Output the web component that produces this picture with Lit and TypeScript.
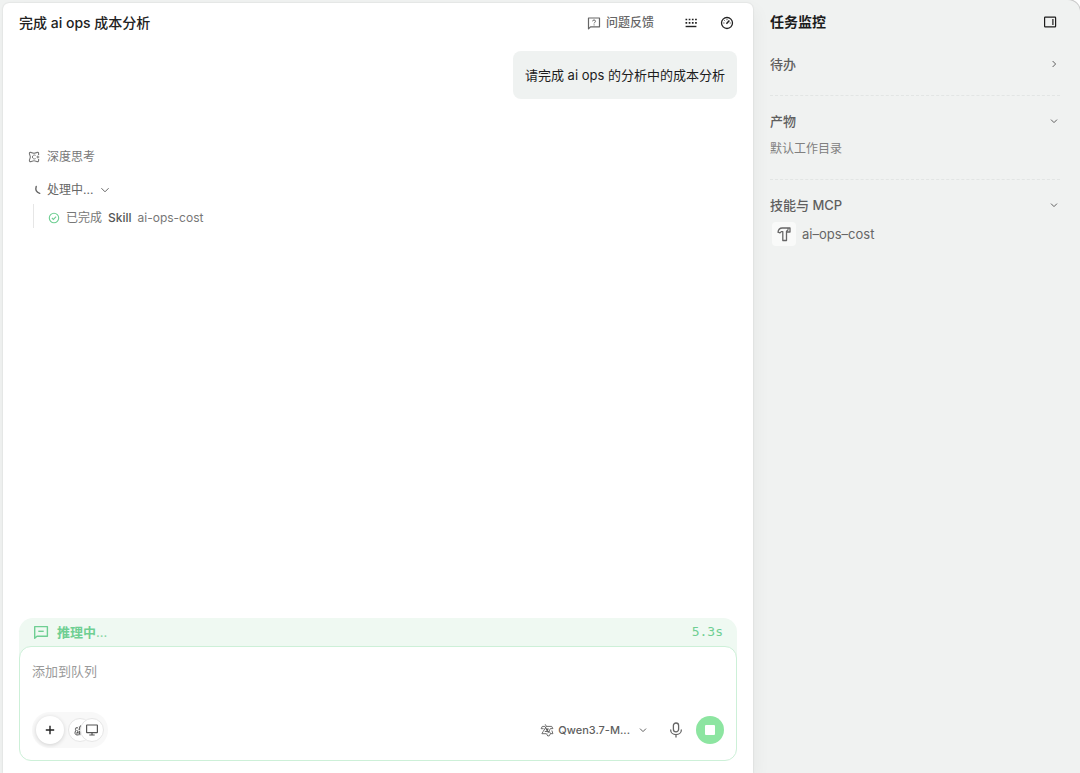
import { LitElement, html, css, svg } from "lit";
import { customElement, property, state } from "lit/decorators.js";

type Glyph = { box: number; body: unknown };

const glyphs: Record<string, Glyph> = {
  feedback: {
    box: 14,
    body: svg`<path d="M1.500 12.800V2h11v8.800H3.500z" stroke-width="1.200" stroke-linejoin="round"/><path d="M5.600 5.300c0-1.800 2.900-1.800 2.900 0 0 1-1.400 1-1.400 2.100M7.100 8.400v1"/>`,
  },
  keyboard: {
    box: 14,
    body: svg`<path d="M1.500 3.500h11.600M1.500 6.900h11.600" stroke-width="1.700" stroke-dasharray="1.700 1.500"/><path d="M1.600 10.500h10.800" stroke-width="1.400"/>`,
  },
  gauge: {
    box: 14,
    body: svg`<circle cx="7" cy="7" r="5.500" stroke-width="1.300"/><path d="M6.400 7.700l3-3.300" stroke-width="1.500"/><path d="M3.200 7h1.300M4.300 4.300l.8.800M7 3v1.200M9.700 7h1.100" stroke-width=".8"/>`,
  },
  panel: {
    box: 14,
    body: svg`<rect x="1.600" y="2.200" width="11" height="9.600" rx=".6" stroke-width="1.200"/><path d="M9.900 4v6" stroke-width="1.200"/>`,
  },
  right: { box: 10, body: svg`<path d="M3.600 2l3 3-3 3"/>` },
  down: { box: 10, body: svg`<path d="M2 3.600l3 3 3-3"/>` },
  expand: { box: 12, body: svg`<path d="M2.400 4.200L6 7.800l3.600-3.600"/>` },
  think: {
    box: 12,
    body: svg`<path d="M10.600 4V2.600c0-1-.6-1.400-1.400-1.200-1.200.3-2 .9-3.200.9S4 1.700 2.800 1.400C2 1.200 1.400 1.600 1.400 2.600c0 1.200.9 1.900.9 3.400s-.9 2.200-.9 3.400c0 1 .6 1.400 1.400 1.200 1.200-.3 2-.9 3.200-.9s2 .6 3.200.9c.8.200 1.400-.2 1.400-1.200V8" stroke-width="1.100"/><path d="M7.600 4.400c-1.300-.9-3.200 0-3.200 1.600s1.900 2.500 3.200 1.600M9.900 4.600v2.800M8.500 6h2.800"/>`,
  },
  spinner: { box: 12, body: svg`<path d="M5.200 2.500c-1 3.200.6 5.900 3.500 6.900" stroke-width="1.400" stroke-linecap="round"/>` },
  check: { box: 12, body: svg`<circle cx="6" cy="6" r="4.700" stroke-width="1.100"/><path d="M3.900 6l1.500 1.500 2.700-2.800" stroke-width="1.100"/>` },
  hammer: {
    box: 16,
    body: svg`<path d="M2 6.200c.3-2.600 1.700-4.200 4.300-4.200H14v4h-2.600l-.9-.7v9.200H6.800V5.600H5.300L4 6.900z" stroke-width="1.300" stroke-linejoin="round"/><path d="M10.500 5.300L12 3.900V2" stroke-width="1.100"/>`,
  },
  message: {
    box: 16,
    body: svg`<path d="M1.700 14.200V2.600h12.700v9.600H4z" stroke-width="1.400" stroke-linejoin="round"/><path d="M5.300 7.300h5.400" stroke-width="1.400"/>`,
  },
  plus: { box: 12, body: svg`<path d="M6 1.800v8.400M1.800 6h8.400" stroke-width="1.400"/>` },
  critter: {
    box: 14,
    body: svg`<path d="M5 4.800C2.700 4.400 2 6.400 2.700 7.600c-1.200 2-.9 4.200 1.300 4.400 2.300.2 3.400-1.700 2.600-4M3.500 7.400l1.600.9-1.300 2.200M6.300 3.400c.6 1.200-.2 2.300-.3 3.800M7.900 2.200c-.1 2-1.200 2.900-1.100 5M2.400 5.600l1-1.300M3.400 9.900h3.200M6.900 8.200v4" stroke-width="1"/>`,
  },
  monitor: {
    box: 14,
    body: svg`<rect x="1.600" y="2" width="10.800" height="7.600" rx=".4" stroke-width="1.200"/><path d="M7 9.600v2.200M4.300 12h5.400" stroke-width="1.200"/>`,
  },
  qwen: {
    box: 14,
    body: svg`<path d="M5.200 1.300l1.200 2.100h5.300l1.200 2.200h-2.500L7.800 10.300M2.300 3.400h2.600l2.600 4.700M2.300 3.400L1.100 5.700h2.500M6.400 3.400L3.100 8.600l-1.200 2.100h4.500L7.800 13l1.500-.2 1.200-2.200-1.200-2.100H4.800M10.500 10.600l2.400.1-1-3.200" stroke-width=".9" stroke-linejoin="round"/><path d="M5.400 5.500h3.600L7.200 8.500z" fill="currentColor" stroke="none"/>`,
  },
  mic: {
    box: 16,
    body: svg`<rect x="5.400" y="1" width="5.200" height="8.800" rx="2.600" stroke-width="1.300"/><path d="M2.600 7.400c0 7 10.800 7 10.800 0M8 12.700v2.700" stroke-width="1.300"/>`,
  },
};

@customElement("ui-icon")
export class UiIcon extends LitElement {
  @property() name = "";

  static styles = css`
    :host {
      display: inline-flex;
      flex: none;
    }
    svg {
      display: block;
      fill: none;
      stroke: currentColor;
    }
  `;

  render() {
    const g = glyphs[this.name];
    return html`<svg width=${g.box} height=${g.box} viewBox="0 0 ${g.box} ${g.box}" aria-hidden="true">${g.body}</svg>`;
  }
}

const base = css`
  * {
    box-sizing: border-box;
  }
  h1,
  h2,
  h3,
  p {
    margin: 0;
    font-weight: 500;
  }
  button {
    display: inline-flex;
    align-items: center;
    justify-content: center;
    margin: 0;
    padding: 0;
    border: 0;
    background: none;
    color: inherit;
    font: inherit;
    cursor: pointer;
  }
`;

@customElement("chat-composer")
export class ChatComposer extends LitElement {
  @state() private draft = "";

  static styles = [
    base,
    css`
      :host {
        display: block;
        border-radius: 14px;
        background: #eff9f2;
      }
      .status {
        display: flex;
        align-items: center;
        gap: 8px;
        height: 28px;
        padding: 0 14px;
        color: #6fcf93;
        font-size: 13px;
        font-weight: 600;
      }
      .dots {
        font-weight: 400;
        opacity: 0.8;
      }
      .elapsed {
        margin-left: auto;
        font-family: "DejaVu Sans Mono", monospace;
        font-weight: 400;
      }
      .box {
        display: flex;
        flex-direction: column;
        padding: 12px;
        border: 1px solid #cdf0d8;
        border-radius: 12px;
        background: #fff;
      }
      .draft {
        display: block;
        width: 100%;
        height: 53px;
        padding: 0;
        border: 0;
        outline: 0;
        resize: none;
        background: none;
        color: #222;
        font: inherit;
        font-size: 13px;
        line-height: 24px;
      }
      .draft::placeholder {
        color: #9a9a9a;
        opacity: 1;
      }
      .tools {
        display: flex;
        align-items: center;
      }
      .pill {
        display: flex;
        align-items: center;
        height: 36px;
        padding: 0 4px;
        border-radius: 18px;
        background: #f8f8f8;
      }
      .round {
        border-radius: 50%;
        background: #fff;
      }
      .add {
        width: 28px;
        height: 28px;
        margin-right: 4px;
        color: #222;
        box-shadow: 0 1px 4px rgba(0, 0, 0, 0.16);
      }
      .chip {
        width: 24px;
        height: 24px;
        border: 1px solid #e6e6e6;
        color: #555;
      }
      .front {
        margin-left: -12px;
      }
      .model {
        gap: 4px;
        margin-left: auto;
        color: #5f5f5f;
        font-size: 11px;
        font-weight: 500;
      }
      .caret {
        margin-left: 4px;
      }
      .voice {
        margin: 0 12px 0 20px;
        color: #666;
      }
      .stop {
        width: 28px;
        height: 28px;
        border-radius: 50%;
        background: #8de5a1;
      }
      .square {
        width: 10px;
        height: 10px;
        border-radius: 1px;
        background: #fff;
      }
    `,
  ];

  render() {
    return html`
      <div class="status" role="status">
        <ui-icon name="message"></ui-icon>
        <span>推理中<span class="dots">...</span></span>
        <span class="elapsed">5.3s</span>
      </div>
      <div class="box">
        <textarea
          class="draft"
          aria-label="添加到队列"
          placeholder="添加到队列"
          .value=${this.draft}
          @input=${(e: Event) => (this.draft = (e.target as HTMLTextAreaElement).value)}
        ></textarea>
        <div class="tools">
          <div class="pill">
            <button class="round add" aria-label="添加"><ui-icon name="plus"></ui-icon></button>
            <button class="round chip" aria-label="助手"><ui-icon name="critter"></ui-icon></button>
            <button class="round chip front" aria-label="桌面"><ui-icon name="monitor"></ui-icon></button>
          </div>
          <button class="model">
            <ui-icon name="qwen"></ui-icon>
            <span>Qwen3.7-M...</span>
            <ui-icon class="caret" name="down"></ui-icon>
          </button>
          <button class="voice" aria-label="语音输入"><ui-icon name="mic"></ui-icon></button>
          <button class="stop" aria-label="停止"><span class="square"></span></button>
        </div>
      </div>
    `;
  }
}

@customElement("task-monitor")
export class TaskMonitor extends LitElement {
  static styles = [
    base,
    css`
      :host {
        display: block;
        padding: 5px 20px 0 17px;
      }
      .top,
      .heading {
        display: flex;
        align-items: center;
        justify-content: space-between;
      }
      .top {
        height: 28px;
        padding-right: 3px;
        color: #1c1c1c;
      }
      .title {
        font-size: 14px;
        font-weight: 600;
      }
      .section {
        padding: 14px 0;
        border-top: 1px dashed #e2e5e4;
      }
      .section.first {
        padding: 17px 0 20px;
        border-top: 0;
      }
      .heading {
        width: 100%;
        height: 22px;
        padding-right: 1px;
        color: #5f5f5f;
        font-size: 13px;
        font-weight: 500;
      }
      .note {
        display: flex;
        align-items: center;
        height: 33px;
        color: #808080;
        font-size: 12px;
        font-weight: 400;
      }
      .skill {
        display: flex;
        align-items: center;
        gap: 6px;
        padding: 6px 2px;
        color: #666;
        font-size: 13px;
        font-weight: 400;
      }
      .tile {
        display: flex;
        align-items: center;
        justify-content: center;
        width: 24px;
        height: 24px;
        border-radius: 4px;
        background: #f9faf9;
      }
    `,
  ];

  render() {
    return html`
      <div class="top">
        <h2 class="title">任务监控</h2>
        <button aria-label="收起面板"><ui-icon name="panel"></ui-icon></button>
      </div>
      <section class="section first">
        <button class="heading" aria-expanded="false">待办<ui-icon name="right"></ui-icon></button>
      </section>
      <section class="section">
        <button class="heading" aria-expanded="true">产物<ui-icon name="down"></ui-icon></button>
        <p class="note">默认工作目录</p>
      </section>
      <section class="section">
        <button class="heading" aria-expanded="true">技能与 MCP<ui-icon name="down"></ui-icon></button>
        <div class="skill"><span class="tile"><ui-icon name="hammer"></ui-icon></span>ai–ops–cost</div>
      </section>
    `;
  }
}

@customElement("app-root")
export class AppRoot extends LitElement {
  static styles = [
    base,
    css`
      :host {
        display: grid;
        grid-template-columns: minmax(0, 1fr) 327px;
        height: 100vh;
        box-sizing: border-box;
        padding: 3px 0 0 3px;
        overflow: hidden;
        border-radius: 0 12px 0 0;
        background: #f0f2f1;
        box-shadow: 0 0 0 1px #c8c8c8;
        font-family: Inter, "Noto Sans CJK SC", sans-serif;
        line-height: 20px;
      }
      .chat {
        display: flex;
        flex-direction: column;
        min-height: 0;
        padding: 0 16px 12px;
        border-radius: 6px 6px 0 0;
        background: #fff;
        box-shadow: 0 0 2px rgba(0, 0, 0, 0.14), 4px 6px 16px rgba(0, 0, 0, 0.04);
      }
      .bar {
        display: flex;
        align-items: center;
        height: 40px;
        padding-right: 3px;
        color: #222;
      }
      .title {
        margin-right: auto;
        font-size: 14px;
        font-weight: 500;
      }
      .feedback {
        gap: 5px;
        height: 22px;
        margin-right: 30px;
        color: #666;
        font-size: 12px;
        font-weight: 500;
        line-height: 22px;
      }
      .keys {
        margin-right: 22px;
      }
      .log {
        display: flex;
        flex: 1;
        flex-direction: column;
        min-height: 0;
        padding-top: 8px;
        overflow: hidden;
        color: #666;
        font-size: 12px;
        line-height: 22px;
      }
      .bubble {
        align-self: flex-end;
        padding: 14px 12px;
        border-radius: 8px;
        background: #eff2f1;
        color: #1c1c1c;
        font-size: 13px;
        font-weight: 400;
        line-height: 20px;
      }
      .row {
        display: flex;
        align-items: center;
        gap: 7px;
        padding-left: 9px;
      }
      .think {
        margin-top: 47px;
        color: #777;
      }
      .work {
        align-self: flex-start;
        margin: 11px 0 3px;
        padding-left: 12px;
        gap: 4px;
      }
      .caret {
        margin-left: 2px;
      }
      .steps {
        display: flex;
        align-items: center;
        gap: 6px;
        height: 24px;
        margin-left: 14px;
        padding: 4px 0 0 14px;
        border-left: 1px solid #e6e6e6;
        color: #777;
      }
      .done {
        color: #6fcf93;
      }
      .tool {
        color: #555;
        font-weight: 500;
      }
    `,
  ];

  render() {
    return html`
      <main class="chat">
        <header class="bar">
          <h1 class="title">完成 ai ops 成本分析</h1>
          <button class="feedback"><ui-icon name="feedback"></ui-icon>问题反馈</button>
          <button class="keys" aria-label="快捷键"><ui-icon name="keyboard"></ui-icon></button>
          <button aria-label="用量"><ui-icon name="gauge"></ui-icon></button>
        </header>
        <div class="log">
          <p class="bubble">请完成 ai ops 的分析中的成本分析</p>
          <div class="row think"><ui-icon name="think"></ui-icon><span>深度思考</span></div>
          <button class="row work" aria-expanded="true">
            <ui-icon name="spinner"></ui-icon><span>处理中...</span><ui-icon class="caret" name="expand"></ui-icon>
          </button>
          <div class="steps">
            <ui-icon class="done" name="check"></ui-icon>
            <span>已完成</span><span class="tool">Skill</span><span>ai-ops-cost</span>
          </div>
        </div>
        <chat-composer></chat-composer>
      </main>
      <task-monitor role="complementary" aria-label="任务监控"></task-monitor>
    `;
  }
}
